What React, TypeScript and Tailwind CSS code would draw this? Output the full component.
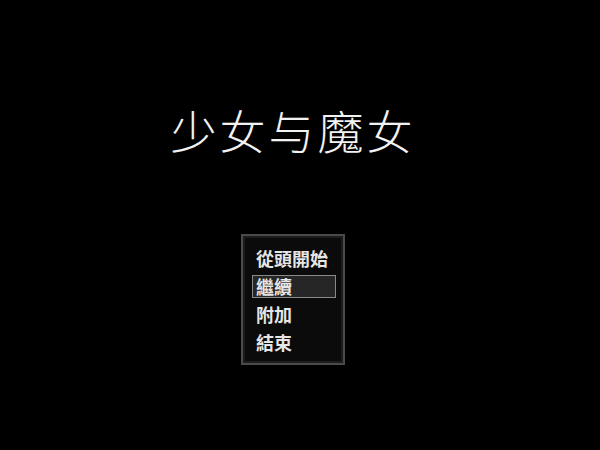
import React from 'react';

const items = ['從頭開始', '繼續', '附加', '結束'];

export default function App() {
  const selected = 1;
  return (
    <div className="w-[600px] h-[450px] bg-black flex flex-col items-center overflow-hidden">
      <h1
        className="mt-[97px] mr-[14px] text-[46px] leading-[64px] font-light tracking-[3px] text-[#f2f2f2]"
        style={{ fontFamily: '"Noto Sans CJK SC", "Noto Sans CJK TC", sans-serif' }}
      >
        少女与魔女
      </h1>
      <div className="mt-[73px] mr-[14px] w-[104px] border-2 border-[#4a4a4a] bg-[#0b0b0b] shadow-[inset_0_0_0_2px_#1c1c1c] pt-[8px] pb-[7px] pl-[9px] pr-[7px]">
        {items.map((label, i) => (
          <div key={label} className="h-[28px] flex items-center">
            <div
              className={`w-full h-[23px] flex items-center pl-[3px] text-[18px] font-bold text-[#e6e6e6] ${
                i === selected ? 'border border-[#8a8a8a] bg-[#262626]' : 'border border-transparent'
              }`}
              style={{ fontFamily: '"Noto Sans CJK TC", sans-serif' }}
            >
              {label}
            </div>
          </div>
        ))}
      </div>
    </div>
  );
}
